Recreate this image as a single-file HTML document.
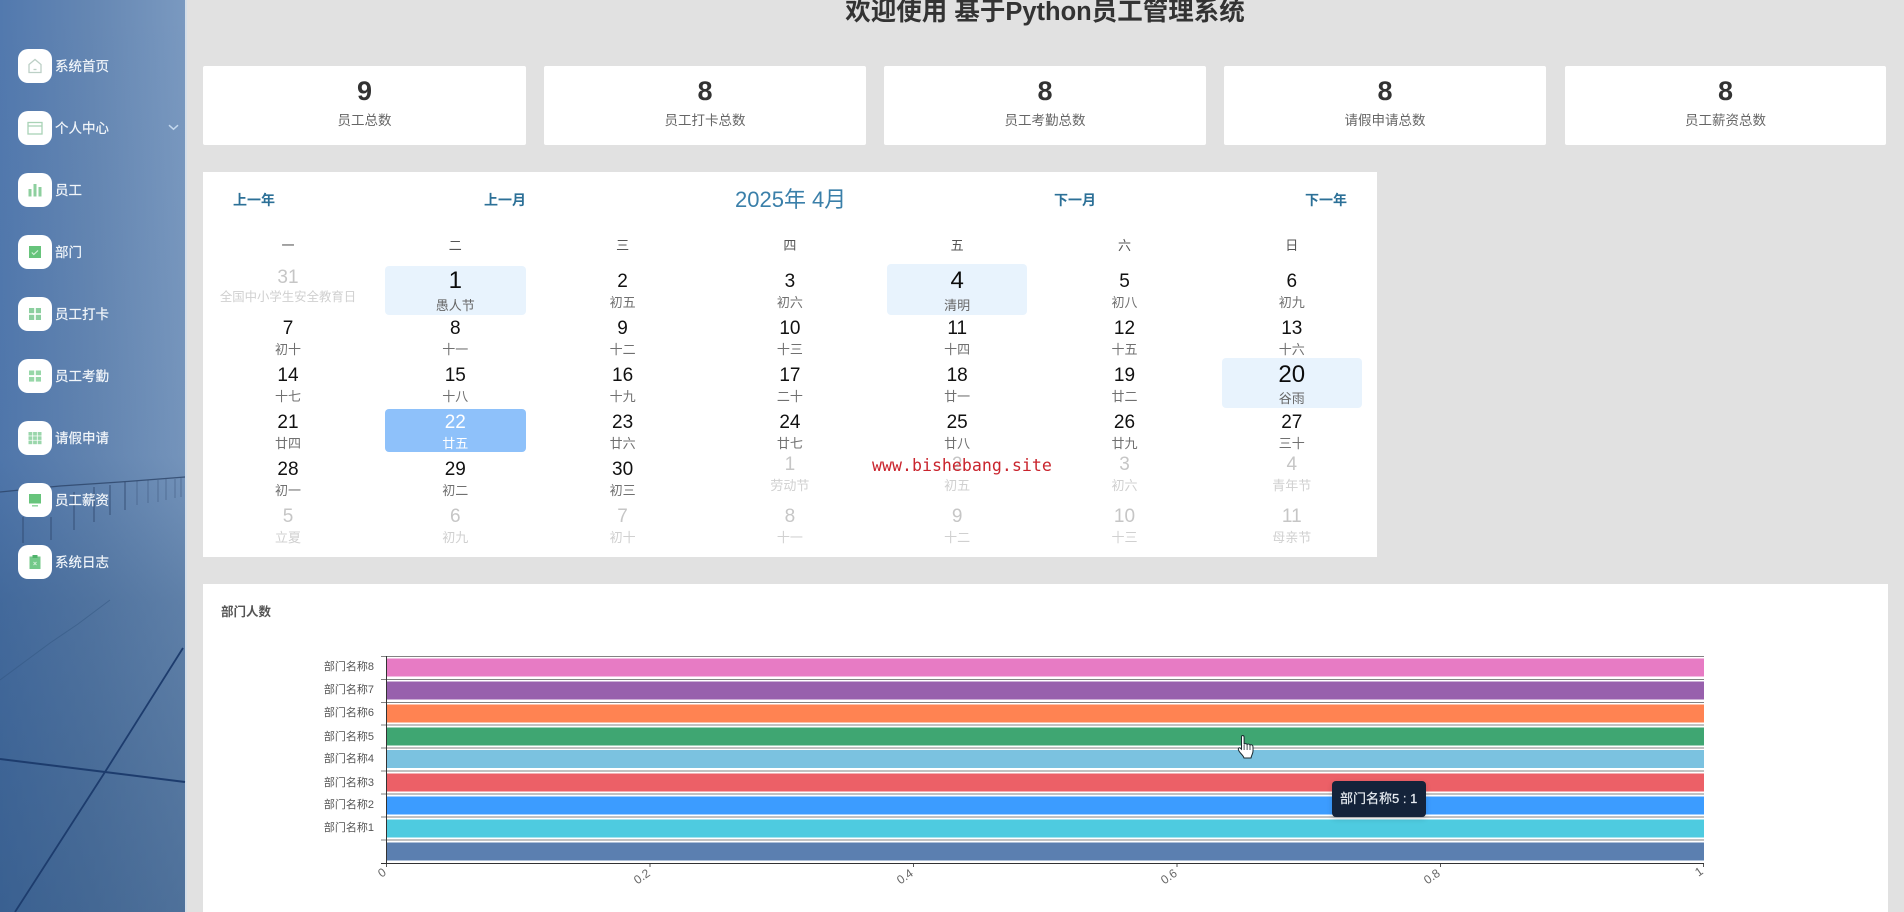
<!DOCTYPE html>
<html lang="zh">
<head>
<meta charset="utf-8">
<title>基于Python员工管理系统</title>
<style>
html,body{margin:0;padding:0;width:1904px;height:912px;overflow:hidden;background:#e1e1e1;font-family:"Liberation Sans","Noto Sans CJK SC",sans-serif;}
*{box-sizing:border-box;}
.abs{position:absolute;}
#side{position:absolute;left:0;top:0;width:187px;height:912px;}
.ic{position:absolute;left:18px;width:34px;height:34px;background:#fff;border-radius:10px;}
.ic svg{position:absolute;left:8px;top:8px;width:18px;height:18px;}
.ml{position:absolute;left:55px;width:110px;height:34px;line-height:36px;font-size:13.5px;color:#f2f6fa;white-space:nowrap;-webkit-text-stroke:.2px #f2f6fa;}
h1{position:absolute;left:745px;width:600px;top:-6px;margin:0;text-align:center;font-size:25.5px;line-height:36px;font-weight:700;color:#333;white-space:nowrap;}
.card{position:absolute;top:66px;height:79px;background:#fff;border-radius:2px;text-align:center;}
.card b{position:absolute;left:0;right:0;top:9px;line-height:32px;font-size:27px;color:#333;}
.card span{position:absolute;left:0;right:0;top:46px;line-height:18px;font-size:13.5px;color:#666;}
#cal{position:absolute;left:203px;top:172px;width:1174px;height:385px;background:#fff;}
.hd{position:absolute;top:191px;line-height:18px;font-size:14px;font-weight:700;color:#2c7097;white-space:nowrap;}
#ct{position:absolute;left:735px;top:186px;line-height:28px;font-size:22px;color:#3a7fa9;white-space:nowrap;}
.hl{position:absolute;background:#e8f3fd;border-radius:4px;}
.r{position:absolute;left:204.35px;width:1171.1px;display:grid;grid-template-columns:repeat(7,167.3px);text-align:center;}
.wk{top:237px;font-size:13px;line-height:18px;color:#555;}
.c b{display:block;font-weight:400;font-size:19px;line-height:22px;color:#111;}
.c i{display:block;font-style:normal;font-size:13px;line-height:16px;margin-top:2px;color:#707070;white-space:nowrap;}
.o b{color:#c6c6c6;}
.o i{color:#d0d0d0;}
.u{position:relative;top:-5px;}
.h{position:relative;top:-3px;}
.h b{font-size:24px;line-height:26px;color:#0c0c0c;}
.h i{margin-top:4px;color:#666;}
.s b,.s i{color:#fff;}
#wm{position:absolute;left:872px;top:455px;line-height:21px;font-family:"DejaVu Sans Mono","Liberation Mono",monospace;font-size:16.6px;color:#c9242d;white-space:nowrap;}
#ch{position:absolute;left:203px;top:584px;width:1685px;height:328px;background:#fff;}
#cht{position:absolute;left:221px;top:604px;line-height:16px;font-size:12.5px;font-weight:700;color:#555;white-space:nowrap;}
#tip{position:absolute;left:1332px;top:781px;width:94px;height:36px;background:#14233a;border-radius:4px;color:#e8edf2;font-size:13px;line-height:36px;padding-left:8px;white-space:nowrap;-webkit-text-stroke:.2px #e8edf2;box-shadow:0 2px 6px rgba(0,0,0,.15);}
</style>
</head>
<body>

<div id="side">
<svg width="187" height="912" viewBox="0 0 187 912" style="position:absolute;left:0;top:0">
<defs>
<linearGradient id="sh" x1="0" y1="0" x2="1" y2="0"><stop offset="0" stop-color="#5279ae"/><stop offset=".5" stop-color="#6587b3"/><stop offset="1" stop-color="#7a99c0"/></linearGradient>
<linearGradient id="sv" x1="0" y1="0" x2="0" y2="1">
<stop offset="0" stop-color="#1e4470" stop-opacity="0"/><stop offset=".5" stop-color="#1e4470" stop-opacity=".06"/><stop offset=".66" stop-color="#1e4470" stop-opacity=".3"/><stop offset=".85" stop-color="#1e4470" stop-opacity=".4"/><stop offset="1" stop-color="#1e4470" stop-opacity=".47"/>
</linearGradient>
</defs>
<rect width="185" height="912" fill="url(#sh)"/>
<rect width="185" height="912" fill="url(#sv)"/>
<rect x="185" width="2" height="912" fill="#d5dee8"/>
<g stroke="#2c4468" fill="none">
<path d="M0 492 L60 486 L120 482 L185 477" stroke-width="1.2" opacity=".8"/>
<path d="M23 517V543M51 517V540M74 492V530M94 487V522M110 485V515M125 482V510" stroke-width="1.2" opacity=".65"/>
<path d="M137 481V505M148 480V503M158 480V502M166 479V500M175 479V498M181 478V497" stroke-width="1" opacity=".4"/>
</g>
<path d="M0 759 L105 772 L185 782" stroke="#1d3c6d" stroke-width="2" fill="none"/>
<path d="M183 648 L105 772 L15 912" stroke="#1d3c6d" stroke-width="1.8" fill="none"/>
<path d="M0 680 L50 643 L78 624 L110 600" stroke="#32567f" stroke-width="1" fill="none" opacity=".5"/>
</svg>

<div class="ic" style="top:49px"><svg viewBox="0 0 18 18" fill="none" stroke="#bcd0c6" stroke-width="1.3"><path d="M3 7.500 9 2.500l6 5V15.500H3Z"/><path d="M7.500 12.500h3"/></svg></div>
<div class="ml" style="top:49px">系统首页</div>

<div class="ic" style="top:111px"><svg viewBox="0 0 18 18" fill="none" stroke="#a9d3b6" stroke-width="1.3"><rect x="2" y="3.500" width="14" height="11.500"/><path d="M2 7h14"/></svg></div>
<div class="ml" style="top:111px">个人中心</div>
<svg class="abs" style="left:168px;top:124px" width="11" height="7" viewBox="0 0 11 7" fill="none" stroke="#c4d8ee" stroke-width="1.5"><path d="M1 1.200l4.500 4 4.500-4"/></svg>

<div class="ic" style="top:173px"><svg viewBox="0 0 18 18" fill="#8dcf9e"><rect x="2.500" y="8" width="3" height="7.500"/><rect x="7.500" y="3" width="3" height="12.500"/><rect x="12.500" y="6" width="3" height="9.500"/></svg></div>
<div class="ml" style="top:173px">员工</div>

<div class="ic" style="top:235px"><svg viewBox="0 0 18 18"><rect x="3" y="3" width="12" height="12" fill="#67c47b"/><path d="M5.800 9.500l2 2 4.200-4" fill="none" stroke="#d8f2de" stroke-width="1.100"/></svg></div>
<div class="ml" style="top:235px">部门</div>

<div class="ic" style="top:297px"><svg viewBox="0 0 18 18" fill="#8ccf9f"><rect x="3" y="3" width="5.200" height="5.200"/><rect x="9.800" y="3" width="5.200" height="5.200"/><rect x="3" y="9.800" width="5.200" height="5.200"/><rect x="9.800" y="9.800" width="5.200" height="5.200"/></svg></div>
<div class="ml" style="top:297px">员工打卡</div>

<div class="ic" style="top:359px"><svg viewBox="0 0 18 18" fill="#97d7a8"><rect x="3" y="3.500" width="5.200" height="4.600"/><rect x="9.800" y="3.500" width="5.200" height="4.600"/><rect x="3" y="10" width="5.200" height="4.600"/><rect x="9.800" y="10" width="5.200" height="4.600"/></svg></div>
<div class="ml" style="top:359px">员工考勤</div>

<div class="ic" style="top:421px"><svg viewBox="0 0 18 18" fill="#9ad6ab"><rect x="2.500" y="3" width="3.800" height="3.600"/><rect x="7.100" y="3" width="3.800" height="3.600"/><rect x="11.700" y="3" width="3.800" height="3.600"/><rect x="2.500" y="7.300" width="3.800" height="3.600"/><rect x="7.100" y="7.300" width="3.800" height="3.600"/><rect x="11.700" y="7.300" width="3.800" height="3.600"/><rect x="2.500" y="11.600" width="3.800" height="3.600"/><rect x="7.100" y="11.600" width="3.800" height="3.600"/><rect x="11.700" y="11.600" width="3.800" height="3.600"/></svg></div>
<div class="ml" style="top:421px">请假申请</div>

<div class="ic" style="top:483px"><svg viewBox="0 0 18 18" fill="#67c47b"><rect x="3" y="3" width="12" height="9.500"/><rect x="6" y="14.300" width="6" height="1.100"/></svg></div>
<div class="ml" style="top:483px">员工薪资</div>

<div class="ic" style="top:545px"><svg viewBox="0 0 18 18"><rect x="3.500" y="3.500" width="11" height="12.500" fill="#74c98a"/><rect x="6.500" y="2" width="5" height="3" fill="#4fb26a"/><path d="M7.500 9l3 3M10.500 9l-3 3" stroke="#cfeed7" stroke-width=".9"/></svg></div>
<div class="ml" style="top:545px">系统日志</div>
</div>

<h1>欢迎使用 基于Python员工管理系统</h1>

<div class="card" style="left:203px;width:323px"><b>9</b><span>员工总数</span></div>
<div class="card" style="left:544px;width:322px"><b>8</b><span>员工打卡总数</span></div>
<div class="card" style="left:884px;width:322px"><b>8</b><span>员工考勤总数</span></div>
<div class="card" style="left:1224px;width:322px"><b>8</b><span>请假申请总数</span></div>
<div class="card" style="left:1565px;width:321px"><b>8</b><span>员工薪资总数</span></div>

<div id="cal"></div>
<div class="hd" style="left:233px">上一年</div>
<div class="hd" style="left:484px">上一月</div>
<div id="ct">2025年 4月</div>
<div class="hd" style="left:1054px">下一月</div>
<div class="hd" style="left:1305px">下一年</div>

<div class="hl" style="left:385px;top:266px;width:141px;height:49px"></div>
<div class="hl" style="left:887px;top:264px;width:140px;height:51px"></div>
<div class="hl" style="left:1222px;top:358px;width:140px;height:50px"></div>
<div class="hl" style="left:385px;top:409px;width:141px;height:43px;background:#8ec1fa"></div>

<div class="r wk"><div>一</div><div>二</div><div>三</div><div>四</div><div>五</div><div>六</div><div>日</div></div>

<div class="r" style="top:271px">
<div class="c o" style="position:relative;top:-4px"><b>31</b><i style="font-size:12.4px;margin-top:0">全国中小学生安全教育日</i></div>
<div class="c h"><b>1</b><i>愚人节</i></div>
<div class="c"><b>2</b><i>初五</i></div>
<div class="c"><b>3</b><i>初六</i></div>
<div class="c h"><b>4</b><i>清明</i></div>
<div class="c"><b>5</b><i>初八</i></div>
<div class="c"><b>6</b><i>初九</i></div>
</div>
<div class="r" style="top:318px">
<div class="c"><b>7</b><i>初十</i></div>
<div class="c"><b>8</b><i>十一</i></div>
<div class="c"><b>9</b><i>十二</i></div>
<div class="c"><b>10</b><i>十三</i></div>
<div class="c"><b>11</b><i>十四</i></div>
<div class="c"><b>12</b><i>十五</i></div>
<div class="c"><b>13</b><i>十六</i></div>
</div>
<div class="r" style="top:365px">
<div class="c"><b>14</b><i>十七</i></div>
<div class="c"><b>15</b><i>十八</i></div>
<div class="c"><b>16</b><i>十九</i></div>
<div class="c"><b>17</b><i>二十</i></div>
<div class="c"><b>18</b><i>廿一</i></div>
<div class="c"><b>19</b><i>廿二</i></div>
<div class="c h"><b>20</b><i style="margin-top:3px">谷雨</i></div>
</div>
<div class="r" style="top:411.500px">
<div class="c"><b>21</b><i>廿四</i></div>
<div class="c s"><b>22</b><i>廿五</i></div>
<div class="c"><b>23</b><i>廿六</i></div>
<div class="c"><b>24</b><i>廿七</i></div>
<div class="c"><b>25</b><i>廿八</i></div>
<div class="c"><b>26</b><i>廿九</i></div>
<div class="c"><b>27</b><i>三十</i></div>
</div>
<div class="r" style="top:459px">
<div class="c"><b>28</b><i>初一</i></div>
<div class="c"><b>29</b><i>初二</i></div>
<div class="c"><b>30</b><i>初三</i></div>
<div class="c o u"><b>1</b><i>劳动节</i></div>
<div class="c o u"><b>2</b><i>初五</i></div>
<div class="c o u"><b>3</b><i>初六</i></div>
<div class="c o u"><b>4</b><i>青年节</i></div>
</div>
<div class="r" style="top:506px">
<div class="c o"><b>5</b><i>立夏</i></div>
<div class="c o"><b>6</b><i>初九</i></div>
<div class="c o"><b>7</b><i>初十</i></div>
<div class="c o"><b>8</b><i>十一</i></div>
<div class="c o"><b>9</b><i>十二</i></div>
<div class="c o"><b>10</b><i>十三</i></div>
<div class="c o"><b>11</b><i>母亲节</i></div>
</div>

<div id="wm">www.bishebang.site</div>

<div id="ch"></div>
<div id="cht">部门人数</div>

<svg class="abs" style="left:0;top:0" width="1904" height="912" viewBox="0 0 1904 912">
<g>
<rect x="386" y="658.500" width="1318" height="18" fill="#e77bc4"/>
<rect x="386" y="681.500" width="1318" height="18" fill="#9860ad"/>
<rect x="386" y="704.500" width="1318" height="18" fill="#ff8352"/>
<rect x="386" y="727.500" width="1318" height="18" fill="#3fa672"/>
<rect x="386" y="750" width="1318" height="18" fill="#7bc2e0"/>
<rect x="386" y="773.500" width="1318" height="18" fill="#ec6067"/>
<rect x="386" y="796.500" width="1318" height="18" fill="#3c9cff"/>
<rect x="386" y="819.500" width="1318" height="18" fill="#4ecbe0"/>
<rect x="386" y="842.500" width="1318" height="18" fill="#5b7fb0"/>
</g>
<path d="M381 656.500H1704M381 679.500H1704M381 702.500H1704M381 725H1704M381 748H1704M381 771H1704M381 794H1704M381 817H1704M381 840H1704" stroke="#5a5a5a" stroke-width="1" fill="none" opacity=".75"/>
<path d="M381 863.500H1704M386.500 656V864" stroke="#333" stroke-width="1" fill="none"/>
<path d="M386.500 864v3M650 864v3M913.500 864v3M1177 864v3M1440.500 864v3M1703.500 864v3" stroke="#555" stroke-width="1" fill="none"/>
<g font-family="Liberation Sans,Noto Sans CJK SC,sans-serif" font-size="11" fill="#555" text-anchor="end">
<text x="374" y="670">部门名称8</text>
<text x="374" y="693">部门名称7</text>
<text x="374" y="716">部门名称6</text>
<text x="374" y="740">部门名称5</text>
<text x="374" y="762">部门名称4</text>
<text x="374" y="786">部门名称3</text>
<text x="374" y="808">部门名称2</text>
<text x="374" y="831">部门名称1</text>
</g>
<g font-family="Liberation Sans,sans-serif" font-size="12" fill="#666" text-anchor="end">
<text transform="translate(387,874) rotate(-35)">0</text>
<text transform="translate(651,875) rotate(-35)">0.2</text>
<text transform="translate(914,875) rotate(-35)">0.4</text>
<text transform="translate(1178,875) rotate(-35)">0.6</text>
<text transform="translate(1441,875) rotate(-35)">0.8</text>
<text transform="translate(1704,873) rotate(-35)">1</text>
</g>
</svg>

<div id="tip">部门名称5 : 1</div>

<svg class="abs" style="left:1237px;top:734px" width="20" height="26" viewBox="0 0 20 26">
<path d="M5.500 1.500c1 0 1.600.7 1.600 1.700v7.200c.4-1 2.600-1 3 .2.6-.9 2.600-.7 2.900.5.7-.7 2.700-.4 2.900 1.100.2 2.200.4 5.400-.4 7.400-.6 1.500-1.200 2.700-1.500 4.400H7c-.4-1.600-1.600-2.900-3-4.400-1.200-1.300-2.500-3.200-2.700-4.300-.2-1.200 1-1.900 2-1.200l1.200 1.100V3.200c0-1 .4-1.700 1-1.700z" fill="#fff" stroke="#1a2a30" stroke-width="1"/>
<path d="M7.100 11v5M10.100 11v5M13 11.500v4.500" stroke="#1a2a30" stroke-width=".8" fill="none"/>
</svg>

</body>
</html>
